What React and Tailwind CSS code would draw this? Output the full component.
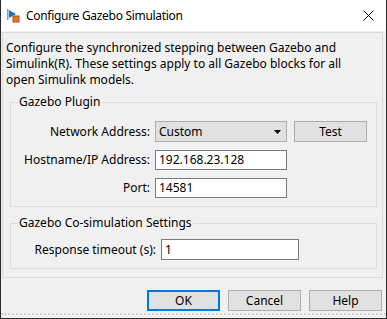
import React from 'react'

const font = { fontFamily: '"Noto Sans", "Open Sans", sans-serif' }

function SimIcon() {
  return (
    <svg width="14" height="14" viewBox="0 0 14 14">
      <rect x="1" y="0" width="1.5" height="11" fill="#5aa7e0" />
      <path d="M3 1 L10 5 L3 9 Z" fill="#1f74c2" />
      <rect x="7" y="7" width="6" height="6" fill="#e8742a" stroke="#b3501a" strokeWidth="1" />
    </svg>
  )
}

function Field({ value, w }) {
  return (
    <div className={`h-[20px] ${w} bg-white border border-[#7a7a7a] flex items-center pl-[3px] text-[12px]`}>
      {value}
    </div>
  )
}

function Btn({ children, def }) {
  return (
    <div
      className={`w-[73px] h-[21px] bg-[#e1e1e1] flex items-center justify-center text-[12px] ${
        def ? 'border-2 border-[#0078d7]' : 'border border-[#adadad]'
      }`}
    >
      {children}
    </div>
  )
}

export default function App() {
  return (
    <div
      className="w-[387px] h-[319px] flex flex-col border-l border-r border-b border-[#2b2b2b] bg-[#f0f0f0] text-black overflow-hidden"
      style={font}
    >
      {/* title bar */}
      <div className="h-[31px] bg-white flex items-center shrink-0">
        <div className="ml-[5px] mt-[1px]">
          <SimIcon />
        </div>
        <span className="ml-[6px] text-[12px] tracking-[-0.3px]">Configure Gazebo Simulation</span>
        <div className="ml-auto mr-[12px]">
          <svg width="11" height="11" viewBox="0 0 11 11">
            <path d="M0.5 0.5 L10.5 10.5 M10.5 0.5 L0.5 10.5" stroke="#000" strokeWidth="1" />
          </svg>
        </div>
      </div>

      {/* main panel */}
      <div className="mt-[1px] ml-[1px] w-[381px] h-[246px] border border-[#dadada] pl-[3px] pt-[7px] shrink-0">
        <p className="text-[12px] leading-[16px] whitespace-nowrap">
          Configure the synchronized stepping between Gazebo and
          <br />
          Simulink(R). These settings apply to all Gazebo blocks for all
          <br />
          open Simulink models.
        </p>

        <fieldset className="mt-[6px] ml-[4px] w-[367px] h-[113px] border border-[#dcdcdc] pt-[11px]">
          <legend className="ml-[7px] px-[1px] text-[12px] leading-[16px]">Gazebo Plugin</legend>
          <div className="flex flex-col gap-[8px]">
            <div className="flex items-center">
              <div className="w-[139px] text-right text-[12px]">Network Address:</div>
              <div className="ml-[5px] w-[132px] h-[21px] bg-[#e1e1e1] border border-[#adadad] flex items-center pl-[3px] pr-[5px] text-[12px]">
                <span>Custom</span>
                <svg className="ml-auto" width="7" height="4" viewBox="0 0 7 4">
                  <path d="M0 0 L7 0 L3.5 4 Z" fill="#000" />
                </svg>
              </div>
              <div className="ml-[7px]">
                <Btn>Test</Btn>
              </div>
            </div>
            <div className="flex items-center">
              <div className="w-[139px] text-right text-[12px]">Hostname/IP Address:</div>
              <div className="ml-[5px]">
                <Field value="192.168.23.128" w="w-[132px]" />
              </div>
            </div>
            <div className="flex items-center">
              <div className="w-[139px] text-right text-[12px]">Port:</div>
              <div className="ml-[5px]">
                <Field value="14581" w="w-[132px]" />
              </div>
            </div>
          </div>
        </fieldset>

        <fieldset className="mt-[8px] ml-[4px] w-[367px] h-[54px] border border-[#dcdcdc] pt-[8px]">
          <legend className="ml-[7px] px-[1px] text-[12px] leading-[16px]">Gazebo Co-simulation Settings</legend>
          <div className="flex items-center">
            <div className="w-[145px] text-right text-[12px]">Response timeout (s):</div>
            <div className="ml-[5px]">
              <div className="h-[21px] w-[138px] bg-white border border-[#7a7a7a] flex items-center pl-[3px] text-[12px]">1</div>
            </div>
          </div>
        </fieldset>
      </div>

      {/* buttons */}
      <div className="mt-[12px] flex justify-end gap-[8px] pr-[4px]">
        <Btn def>OK</Btn>
        <Btn>Cancel</Btn>
        <Btn>Help</Btn>
      </div>

      <div className="mt-auto mb-[3px] h-[2px] border-t-2 border-dotted border-[#d0d0d0]" />
    </div>
  )
}
